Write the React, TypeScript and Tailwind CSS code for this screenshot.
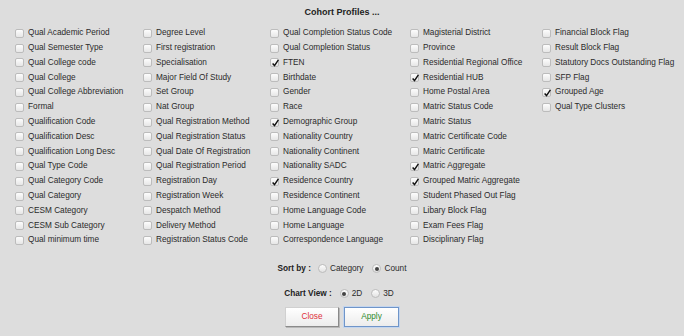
import React from 'react';

type Item = { label: string; checked?: boolean };

const columns: { width: string; items: Item[] }[] = [
  {
    width: 'w-[128px]',
    items: [
      { label: 'Qual Academic Period' },
      { label: 'Qual Semester Type' },
      { label: 'Qual College code' },
      { label: 'Qual College' },
      { label: 'Qual College Abbreviation' },
      { label: 'Formal' },
      { label: 'Qualification Code' },
      { label: 'Qualification Desc' },
      { label: 'Qualification Long Desc' },
      { label: 'Qual Type Code' },
      { label: 'Qual Category Code' },
      { label: 'Qual Category' },
      { label: 'CESM Category' },
      { label: 'CESM Sub Category' },
      { label: 'Qual minimum time' },
    ],
  },
  {
    width: 'w-[127px]',
    items: [
      { label: 'Degree Level' },
      { label: 'First registration' },
      { label: 'Specialisation' },
      { label: 'Major Field Of Study' },
      { label: 'Set Group' },
      { label: 'Nat Group' },
      { label: 'Qual Registration Method' },
      { label: 'Qual Registration Status' },
      { label: 'Qual Date Of Registration' },
      { label: 'Qual Registration Period' },
      { label: 'Registration Day' },
      { label: 'Registration Week' },
      { label: 'Despatch Method' },
      { label: 'Delivery Method' },
      { label: 'Registration Status Code' },
    ],
  },
  {
    width: 'w-[140px]',
    items: [
      { label: 'Qual Completion Status Code' },
      { label: 'Qual Completion Status' },
      { label: 'FTEN', checked: true },
      { label: 'Birthdate' },
      { label: 'Gender' },
      { label: 'Race' },
      { label: 'Demographic Group', checked: true },
      { label: 'Nationality Country' },
      { label: 'Nationality Continent' },
      { label: 'Nationality SADC' },
      { label: 'Residence Country', checked: true },
      { label: 'Residence Continent' },
      { label: 'Home Language Code' },
      { label: 'Home Language' },
      { label: 'Correspondence Language' },
    ],
  },
  {
    width: 'w-[132px]',
    items: [
      { label: 'Magisterial District' },
      { label: 'Province' },
      { label: 'Residential Regional Office' },
      { label: 'Residential HUB', checked: true },
      { label: 'Home Postal Area' },
      { label: 'Matric Status Code' },
      { label: 'Matric Status' },
      { label: 'Matric Certificate Code' },
      { label: 'Matric Certificate' },
      { label: 'Matric Aggregate', checked: true },
      { label: 'Grouped Matric Aggregate', checked: true },
      { label: 'Student Phased Out Flag' },
      { label: 'Libary Block Flag' },
      { label: 'Exam Fees Flag' },
      { label: 'Disciplinary Flag' },
    ],
  },
  {
    width: 'flex-1',
    items: [
      { label: 'Financial Block Flag' },
      { label: 'Result Block Flag' },
      { label: 'Statutory Docs Outstanding Flag' },
      { label: 'SFP Flag' },
      { label: 'Grouped Age', checked: true },
      { label: 'Qual Type Clusters' },
    ],
  },
];

function CheckBox({ checked }: { checked?: boolean }) {
  return (
    <span className="relative w-[9px] h-[9px] shrink-0 rounded-[2px] border border-[#bcbcbc] bg-gradient-to-b from-[#fdfdfd] to-[#e6e6e6]">
      {checked && (
        <svg viewBox="0 0 10 10" className="absolute left-[0px] top-[-1px] w-[9px] h-[10px]">
          <path d="M1.8 5.6 L3.9 7.9 L8.2 1.6" fill="none" stroke="#111" strokeWidth="1.6" />
        </svg>
      )}
    </span>
  );
}

function Radio({ checked }: { checked?: boolean }) {
  return (
    <span className="flex items-center justify-center w-[9px] h-[9px] rounded-full border border-[#bcbcbc] bg-gradient-to-b from-[#fdfdfd] to-[#e2e2e2]">
      {checked && <span className="w-[4px] h-[4px] rounded-full bg-[#444]" />}
    </span>
  );
}

export default function App() {
  return (
    <div className="w-[684px] h-[336px] bg-[#dddddd] text-[#2b2b2b] text-[8.25px] font-['Liberation_Sans',Arial,sans-serif] overflow-hidden">
      <div className="h-[26px] pt-[6px] flex justify-center font-bold text-[9px] text-[#222]">
        Cohort Profiles ...
      </div>

      {/* checkbox grid */}
      <div className="flex pl-[15px]">
        {columns.map((col, ci) => (
          <div key={ci} className={`${col.width} flex flex-col`}>
            {col.items.map((it) => (
              <label key={it.label} className="h-[14.8px] flex items-center gap-[4px] whitespace-nowrap">
                <CheckBox checked={it.checked} />
                <span>{it.label}</span>
              </label>
            ))}
          </div>
        ))}
      </div>

      {/* options */}
      <div className="mt-[13px] h-[16px] flex items-center justify-center">
        <span className="font-bold text-[#222] mr-[7px]">Sort by :</span>
        <Radio />
        <span className="ml-[3px] mr-[9px]">Category</span>
        <Radio checked />
        <span className="ml-[3px]">Count</span>
      </div>
      <div className="mt-[9px] h-[16px] flex items-center justify-center pr-[6px]">
        <span className="font-bold text-[#222] mr-[8px]">Chart View :</span>
        <Radio checked />
        <span className="ml-[3px] mr-[9px]">2D</span>
        <Radio />
        <span className="ml-[3px]">3D</span>
      </div>

      <div className="mt-[5px] flex justify-center gap-[5px]">
        <button className="w-[54px] h-[20px] bg-gradient-to-b from-[#ffffff] to-[#ececec] border border-[#d0d0d0] border-r-[#8a8a8a] border-b-[#8a8a8a] shadow-[1px_1px_0_#b8b8b8] text-[#e0303a]">
          Close
        </button>
        <button className="w-[55px] h-[20px] bg-gradient-to-b from-[#ffffff] to-[#ececec] border border-[#6f95c9] shadow-[0_0_0_1px_#c3d5ee] text-[#2d8a2d]">
          Apply
        </button>
      </div>
    </div>
  );
}
